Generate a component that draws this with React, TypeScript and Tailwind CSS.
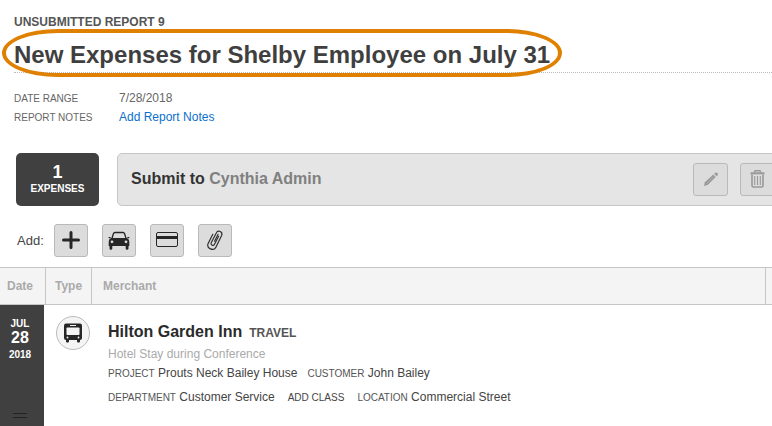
import type { ReactNode } from 'react';

function IconButton({ label, className = '', children }: { label: string; className?: string; children: ReactNode }) {
  return (
    <button
      type="button"
      aria-label={label}
      className={`flex h-[33px] shrink-0 items-center justify-center rounded-[3px] border border-[#b9b9b9] bg-[#dcdcdc] ${className}`}
    >
      {children}
    </button>
  );
}

function PlusIcon() {
  return (
    <svg width="18" height="20" viewBox="0 0 18 20" fill="none" stroke="#262626" strokeWidth="3" strokeLinecap="round">
      <path d="M9 1.500v15M1.500 9h15" />
    </svg>
  );
}

function CarIcon() {
  return (
    <svg width="22" height="20" viewBox="0 0 22 20">
      <path d="M3.800 8 5.400 2.700Q5.800 1.500 7 1.500h8q1.200 0 1.600 1.200L18.200 8" fill="none" stroke="#262626" strokeWidth="1.300" />
      <path
        fill="#262626"
        fillRule="evenodd"
        d="M3 7h16q2.300 1 2.300 3.600v4.400h-.8v2.400a1.400 1.400 0 0 1-2.800 0V15H4.300v2.400a1.400 1.400 0 0 1-2.800 0V15H.7v-4.400Q.7 8 3 7ZM4 9.400a1.400 1.400 0 1 0 0 2.800 1.400 1.400 0 0 0 0-2.800Zm14 0a1.400 1.400 0 1 0 0 2.800 1.400 1.400 0 0 0 0-2.800Z"
      />
      <path d="M.2 6h2.600l-.4 1.300H1.200ZM21.800 6h-2.600l.4 1.300h1.200Z" fill="#262626" />
    </svg>
  );
}

function CardIcon() {
  return (
    <svg width="22" height="17" viewBox="0 0 22 17">
      <rect x="0.500" y="0.500" width="21" height="14" rx="1.500" fill="none" stroke="#262626" />
      <path d="M1 4h20v3H1z" fill="#262626" />
    </svg>
  );
}

function ClipIcon() {
  return (
    <svg width="18" height="23" viewBox="0 0 18 23" fill="none" stroke="#303030" strokeWidth="1.200" strokeLinecap="round">
      <path d="M12.600 7.300 8.400 15.500c-1 2-4.200.4-3.200-1.700L10.300 3.900c1.600-3.300 6.900-1.200 5.300 2.500L9.900 18.200c-2.200 4.500-9.900 1.200-7.900-3.400L6.800 5.300" />
      <path d="m8.600 12.200 3.400-6.800" />
    </svg>
  );
}

function PencilIcon() {
  return (
    <svg width="16" height="18" viewBox="0 0 16 18" fill="#98999b">
      <path d="M1 15 1.900 11.200 10.300 3.600 12.700 6 4.600 14.100Z" />
      <path d="m11.200 2.800 1.100-1q.8-.7 1.600 0l.8.8q.7.8 0 1.600l-1.100 1Z" />
      <path d="m3.600 12.400 7-6.700" stroke="#c4c5c6" strokeWidth="0.500" />
    </svg>
  );
}

function TrashIcon() {
  return (
    <svg width="15" height="20" viewBox="0 0 15 20" fill="none" stroke="#989898">
      <path d="M4.500 2.500V1.500q0-.8.8-.8h4.400q.8 0 .8.800v1" strokeWidth="1.400" />
      <path d="M.5 3.300h14" strokeWidth="2" />
      <path d="M2 4.500v11q0 1.500 1.500 1.500h8q1.500 0 1.500-1.500v-11" strokeWidth="1.600" />
      <path d="M4.700 6v9M7.500 6v9M10.300 6v9" strokeWidth="1.100" />
    </svg>
  );
}

function BusIcon() {
  return (
    <svg width="20" height="20" viewBox="0 0 20 20" fill="#262626">
      <rect x="3" y="14" width="3" height="5.500" rx="1" />
      <rect x="14" y="14" width="3" height="5.500" rx="1" />
      <rect x="1" y="0.500" width="18" height="16.500" rx="2" />
      <rect x="7" y="2" width="6" height="1" fill="#f4f4f4" />
      <rect x="3.500" y="4.500" width="13" height="7.500" rx="0.800" fill="#f4f4f4" />
      <circle cx="4.500" cy="14.500" r="0.900" fill="#f4f4f4" />
      <circle cx="15.500" cy="14.500" r="0.900" fill="#f4f4f4" />
    </svg>
  );
}

function Field({ label, value }: { label: string; value: string }) {
  return (
    <span>
      <span className="text-[10px] text-[#555]">{label}</span> {value}
    </span>
  );
}

function ReportHeader() {
  return (
    <header className="pl-3.5 pt-[14px]">
      <h2 className="text-[12px] leading-4 font-bold text-[#555]">UNSUBMITTED REPORT 9</h2>
      <div className="relative border-b border-dotted border-[#bbb] pt-[10px] pb-[3px]">
        <h1 className="text-[24px] leading-[29px] font-bold whitespace-nowrap text-[#3f3f3f]">
          New Expenses for Shelby Employee on July 31
        </h1>
        <div className="pointer-events-none absolute -top-px -left-3 h-12 w-[560px] rounded-[56px/24px] border-4 border-[#e08000]" />
      </div>
      <dl className="mt-4 grid grid-cols-[105px_1fr] text-[12px] leading-[19px] text-[#666]">
        <dt className="text-[10px]">DATE RANGE</dt>
        <dd>7/28/2018</dd>
        <dt className="text-[10px]">REPORT NOTES</dt>
        <dd>
          <a href="#notes" className="text-[#0b6fcc]">Add Report Notes</a>
        </dd>
      </dl>
    </header>
  );
}

function SubmitBar() {
  return (
    <div className="mt-[26px] flex gap-[18px] pl-4">
      <div className="flex h-[53px] w-[83px] shrink-0 flex-col items-center justify-center rounded-[5px] bg-[#404040] pb-0.5 font-bold text-white">
        <span className="text-[18px] leading-5">1</span>
        <span className="text-[10px] leading-[14px]">EXPENSES</span>
      </div>
      <div className="-mr-4 flex h-[53px] flex-1 items-center rounded-[5px] border border-[#c6c6c6] bg-[#e5e5e5] pr-3 pl-[13px]">
        <p className="flex-1 pb-0.5 text-[16px] font-bold text-[#333]">
          Submit to <span className="text-[#808080]">Cynthia Admin</span>
        </p>
        <div className="flex gap-3">
          <IconButton label="Edit approver" className="w-[35px]"><PencilIcon /></IconButton>
          <IconButton label="Delete report" className="w-[35px]"><TrashIcon /></IconButton>
        </div>
      </div>
    </div>
  );
}

function AddToolbar() {
  return (
    <div className="mt-[18px] flex items-center pl-[17px]">
      <span className="w-[37px] text-[13px] text-[#444]">Add:</span>
      <div className="flex gap-[14px]">
        <IconButton label="Add expense" className="w-[34px]"><PlusIcon /></IconButton>
        <IconButton label="Add mileage" className="w-[34px]"><CarIcon /></IconButton>
        <IconButton label="Add card expense" className="w-[34px]"><CardIcon /></IconButton>
        <IconButton label="Add attachment" className="w-[34px]"><ClipIcon /></IconButton>
      </div>
    </div>
  );
}

function ExpenseTable() {
  return (
    <table className="mt-[10px] w-full table-fixed border-separate border-spacing-0 text-left">
      <colgroup>
        <col className="w-[46px]" />
        <col className="w-[46px]" />
        <col />
        <col className="w-[6px]" />
      </colgroup>
      <thead className="text-[12px] text-[#aaa]">
        <tr className="h-[38px] bg-[#f4f4f4]">
          <th className="border-y border-r border-[#c6c6c6] pl-[7px]">Date</th>
          <th className="border-y border-r border-[#c6c6c6] pl-[9px]">Type</th>
          <th className="border-y border-r border-[#c6c6c6] pl-[11px]">Merchant</th>
          <td className="border-y border-[#c6c6c6]" />
        </tr>
      </thead>
      <tbody>
        <tr className="align-top">
          <td>
            <div className="flex h-[121px] w-11 flex-col items-center bg-[#404040] pt-3 pr-1 font-bold text-white">
              <span className="text-[10px] leading-[14px]">JUL</span>
              <span className="text-[16px] leading-[14px]">28</span>
              <span className="mt-[3px] text-[10px] leading-[14px]">2018</span>
              <div className="mt-auto mb-2 h-[5px] w-[14px] border-y border-[#222]" />
            </div>
          </td>
          <td className="pt-[11px] pl-[10px]">
            <div className="flex size-[34px] items-center justify-center rounded-full border border-[#bbb] bg-[#f4f4f4]">
              <BusIcon />
            </div>
          </td>
          <td className="pt-[17px] pl-4 text-[12px] text-[#444]">
            <div className="flex items-baseline gap-[7px] leading-5">
              <span className="text-[16px] font-bold text-[#2b2b2b]">Hilton Garden Inn</span>
              <span className="text-[12px] font-bold text-[#555]">TRAVEL</span>
            </div>
            <p className="mt-0.5 leading-[19px] text-[#aaa]">Hotel Stay during Conference</p>
            <div className="flex gap-[10px] leading-[19px]">
              <Field label="PROJECT" value="Prouts Neck Bailey House" />
              <Field label="CUSTOMER" value="John Bailey" />
            </div>
            <div className="mt-[5px] flex gap-[13px] leading-[19px]">
              <Field label="DEPARTMENT" value="Customer Service" />
              <button type="button" className="text-[10px]">ADD CLASS</button>
              <Field label="LOCATION" value="Commercial Street" />
            </div>
          </td>
          <td />
        </tr>
      </tbody>
    </table>
  );
}

export default function App() {
  return (
    <main className="overflow-x-hidden bg-white font-['Liberation_Sans',Arial,sans-serif]">
      <ReportHeader />
      <SubmitBar />
      <AddToolbar />
      <ExpenseTable />
    </main>
  );
}
